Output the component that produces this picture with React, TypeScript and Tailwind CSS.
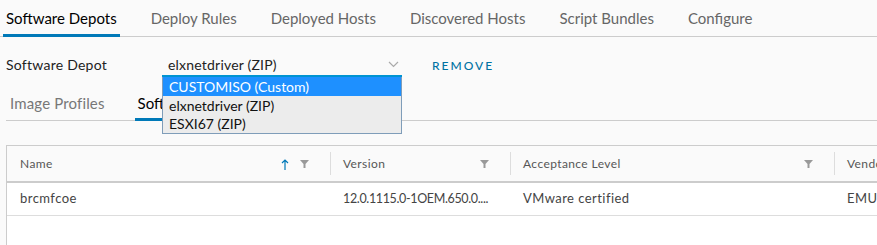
import React from "react";

const FilterIcon = () => (
  <svg width="9" height="8" viewBox="0 0 9 8" className="block">
    <path d="M0 0h9L5.5 4v4h-2V4z" fill="#999" />
  </svg>
);

const SortUp = () => (
  <svg width="8" height="11" viewBox="0 0 8 11" className="block">
    <path d="M4 1v10M1 4l3-3 3 3" stroke="#0079b8" strokeWidth="1.2" fill="none" />
  </svg>
);

const Chevron = () => (
  <svg width="11" height="7" viewBox="0 0 11 7" className="block">
    <path d="M1 1l4.5 4.5L10 1" stroke="#aaa" strokeWidth="1.2" fill="none" />
  </svg>
);

export default function App() {
  const tabs = ["Software Depots", "Deploy Rules", "Deployed Hosts", "Discovered Hosts", "Script Bundles", "Configure"];
  return (
    <div className="relative w-[877px] h-[245px] overflow-hidden bg-[#fafafa] text-[#313131]" style={{ fontFamily: "Lato, 'Liberation Sans', sans-serif" }}>
      {/* top tabs */}
      <div className="h-[37px] border-b border-[#cccccc] flex items-end pl-[3px] gap-[28px]">
        {tabs.map((t, i) => (
          <div
            key={t}
            className={
              "px-[3px] h-full flex items-center pt-[1px] text-[15px] border-b-[3px] -mb-[1px] " +
              (i === 0 ? "border-[#0079b8] text-[#000]" : "border-transparent text-[#666]")
            }
          >
            {t}
          </div>
        ))}
      </div>

      {/* Software depot row */}
      <div className="flex items-end h-[40px]">
        <div className="w-[162px] pl-[6px] pb-[2px] text-[14px] tracking-[0.25px] text-[#222]">Software Depot</div>
        <div className="w-[240px] h-[30px] border-b-2 border-[#0094d2] flex items-center justify-between pl-[6px] pr-[3px] pt-[7px] text-[14px] tracking-[0.2px] text-[#222]">
          <span>elxnetdriver (ZIP)</span>
          <Chevron />
        </div>
        <div className="ml-[30px] pb-[2px] text-[12px] tracking-[2px] text-[#0072a3] font-medium">REMOVE</div>
      </div>

      {/* sub tabs */}
      <div className="ml-[6px] mt-[8px] h-[36px] border-b border-[#cccccc] flex items-end gap-[27px]">
        <div className="pl-[4px] pr-[3px] h-full flex items-center pt-[3px] text-[15px] tracking-[0.15px] text-[#777] border-b-[3px] border-transparent -mb-[1px]">
          Image Profiles
        </div>
        <div className="px-[3px] h-full flex items-center pt-[3px] text-[15px] text-[#000] border-b-[3px] border-[#0079b8] -mb-[1px]">
          Software Packages
        </div>
      </div>

      {/* table */}
      <div className="ml-[6px] mt-[24px] w-[1000px] border-l border-t border-[#cccccc] bg-white">
        <div className="flex h-[37px] bg-[#fafafa] border-b-2 border-[#cccccc] text-[12px] tracking-[0.4px] text-[#565656]">
          <div className="w-[323px] flex items-center pl-[13px] pr-[21px] pt-[1px]">
            <span className="flex-1">Name</span>
            <SortUp />
            <span className="ml-[11px]"><FilterIcon /></span>
          </div>
          <div className="w-[1px] bg-[#dddddd] my-[6px]" />
          <div className="w-[179px] flex items-center pl-[12px] pr-[21px] pt-[1px]">
            <span className="flex-1">Version</span>
            <FilterIcon />
          </div>
          <div className="w-[1px] bg-[#dddddd] my-[6px]" />
          <div className="w-[323px] flex items-center pl-[12px] pr-[21px] pt-[1px]">
            <span className="flex-1">Acceptance Level</span>
            <FilterIcon />
          </div>
          <div className="w-[1px] bg-[#dddddd] my-[6px]" />
          <div className="flex items-center pl-[12px] pt-[1px]">Vendor</div>
        </div>
        <div className="flex h-[33px] border-b border-[#dddddd] text-[13px] tracking-[0.45px] text-[#444] items-center">
          <div className="w-[324px] pl-[13px]">brcmfcoe</div>
          <div className="w-[180px] pl-[12px] text-[12.5px] tracking-[-0.35px]">12.0.1115.0-1OEM.650.0....</div>
          <div className="w-[324px] pl-[12px]">VMware certified</div>
          <div className="pl-[12px]">EMU</div>
        </div>
        <div className="h-[40px]" />
      </div>

      {/* open dropdown */}
      <div className="absolute left-[162px] top-[77px] w-[240px] h-[57px] bg-[#ececec] border border-[#7f9db9] border-t-0 text-[14px] text-[#111]">
        <div className="h-[19px] bg-[#1e90ff] text-white pl-[6px] leading-[19px]">CUSTOMISO (Custom)</div>
        <div className="h-[19px] pl-[6px] leading-[19px]">elxnetdriver (ZIP)</div>
        <div className="h-[18px] pl-[6px] leading-[18px]">ESXI67 (ZIP)</div>
      </div>
    </div>
  );
}
